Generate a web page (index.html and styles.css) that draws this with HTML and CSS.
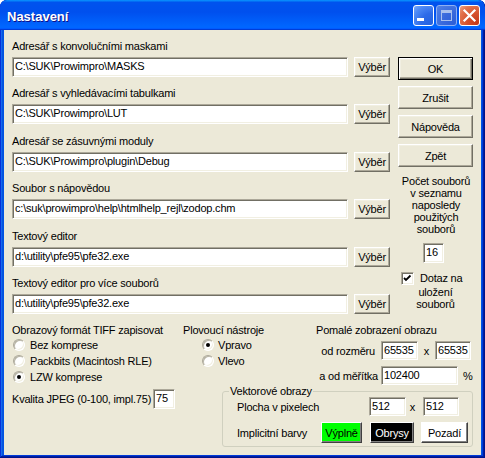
FILE: index.html
```html
<!DOCTYPE html>
<html lang="cs">
<head>
<meta charset="utf-8">
<title>Nastavení</title>
<link rel="stylesheet" href="styles.css">
</head>
<body>
<div class="window">
  <div class="titlebar">
    <span class="title">Nastavení</span>
    <div class="tb-buttons">
      <span class="tb-btn tb-min"><svg width="19" height="19" viewBox="0 0 19 19"><rect x="3" y="12" width="7" height="3" fill="#fff"/></svg></span>
      <span class="tb-btn tb-max"><svg width="19" height="19" viewBox="0 0 19 19"><rect x="4.5" y="4.5" width="10" height="10" fill="none" stroke="#a9c0ee" stroke-width="1"/><rect x="4" y="4" width="11" height="3" fill="#a9c0ee"/></svg></span>
      <span class="tb-btn tb-close"><svg width="19" height="19" viewBox="0 0 19 19"><path d="M4.5 4.5 L14.5 14.5 M14.5 4.5 L4.5 14.5" stroke="#fff" stroke-width="2.2" stroke-linecap="square"/></svg></span>
    </div>
  </div>
  <div class="client">
    <div class="top">
      <div class="paths">
        <div class="path-row">
          <div class="label">Adresář s konvolučními maskami</div>
          <div class="field-line"><div class="edit path-edit">C:\SUK\Prowimpro\MASKS</div><div class="btn pick">Výběr</div></div>
        </div>
        <div class="path-row">
          <div class="label">Adresář s vyhledávacími tabulkami</div>
          <div class="field-line"><div class="edit path-edit">C:\SUK\Prowimpro\LUT</div><div class="btn pick">Výběr</div></div>
        </div>
        <div class="path-row">
          <div class="label">Adresář se zásuvnými moduly</div>
          <div class="field-line"><div class="edit path-edit">C:\SUK\Prowimpro\plugin\Debug</div><div class="btn pick">Výběr</div></div>
        </div>
        <div class="path-row">
          <div class="label">Soubor s nápovědou</div>
          <div class="field-line"><div class="edit path-edit">c:\suk\prowimpro\help\htmlhelp_rejl\zodop.chm</div><div class="btn pick">Výběr</div></div>
        </div>
        <div class="path-row">
          <div class="label">Textový editor</div>
          <div class="field-line"><div class="edit path-edit">d:\utility\pfe95\pfe32.exe</div><div class="btn pick">Výběr</div></div>
        </div>
        <div class="path-row">
          <div class="label">Textový editor pro více souborů</div>
          <div class="field-line"><div class="edit path-edit">d:\utility\pfe95\pfe32.exe</div><div class="btn pick">Výběr</div></div>
        </div>
      </div>
      <div class="side">
        <div class="btn side-btn default">OK</div>
        <div class="btn side-btn">Zrušit</div>
        <div class="btn side-btn">Nápověda</div>
        <div class="btn side-btn">Zpět</div>
        <div class="side-text">Počet souborů<br>v seznamu<br>naposledy<br>použitých<br>souborů</div>
        <div class="edit count-edit">16</div>
        <div class="check-row">
          <span class="checkbox"><svg width="9" height="9" viewBox="0 0 9 9"><path d="M1 4 L3 6 L7.5 1.5" fill="none" stroke="#000" stroke-width="1.8"/></svg></span>
          <span>Dotaz na</span>
        </div>
        <div class="check-more">uložení<br>souborů</div>
      </div>
    </div>
    <div class="bottom">
      <div class="tiff">
        <div class="heading">Obrazový formát TIFF zapisovat</div>
        <div class="radio-row"><span class="radio"></span>Bez komprese</div>
        <div class="radio-row"><span class="radio"></span>Packbits (Macintosh RLE)</div>
        <div class="radio-row"><span class="radio on"></span>LZW komprese</div>
        <div class="jpeg-row"><span>Kvalita JPEG (0-100, impl.75)</span><div class="edit jpeg-edit">75</div></div>
      </div>
      <div class="right-area">
        <div class="top-row">
          <div class="plov">
            <div class="heading">Plovoucí nástroje</div>
            <div class="radio-row indent"><span class="radio on"></span>Vpravo</div>
            <div class="radio-row indent"><span class="radio"></span>Vlevo</div>
          </div>
          <div class="pomale">
            <div class="heading">Pomalé zobrazení obrazu</div>
            <div class="pr-row">
              <span class="pr-label first">od rozměru</span>
              <div class="edit num-edit">65535</div>
              <span class="times">x</span>
              <div class="edit num-edit narrow">65535</div>
            </div>
            <div class="pr-row second">
              <span class="pr-label">a od měřítka</span>
              <div class="edit scale-edit">102400</div>
              <span class="pct">%</span>
            </div>
          </div>
        </div>
        <fieldset class="group">
          <legend>Vektorové obrazy</legend>
          <div class="g-row">
            <span class="g-label plocha">Plocha v pixelech</span>
            <div class="edit num-edit">512</div>
            <span class="times g-times">x</span>
            <div class="edit num-edit narrow">512</div>
          </div>
          <div class="g-row colors">
            <span class="g-label barvy">Implicitní barvy</span>
            <div class="btn color-btn fill">Výplně</div>
            <div class="btn color-btn outline">Obrysy</div>
            <div class="btn color-btn back">Pozadí</div>
          </div>
        </fieldset>
      </div>
    </div>
  </div>
</div>
</body>
</html>
```
FILE: styles.css
```css
html, body {
  margin: 0;
  padding: 0;
  background: #ffffff;
}

body {
  font-family: "Liberation Sans", Arial, sans-serif;
  font-size: 11px;
  letter-spacing: -0.2px;
  color: #000;
}

.window {
  width: 485px;
  height: 458px;
  display: flex;
  flex-direction: column;
  background: #0055e5;
  border-radius: 7px 7px 0 0;
  overflow: hidden;
  box-shadow: inset -1px -1px #00138c, inset 1px 1px #0831d9, inset -2px -2px #001ea0, inset 2px 2px #166aee, inset -3px -3px #003bda, inset 3px 3px #0855dd;
}

/* ---------- title bar ---------- */
.titlebar {
  flex: none;
  height: 30px;
  box-sizing: border-box;
  display: flex;
  align-items: flex-start;
  padding: 5px 5px 0 7px;
  background: linear-gradient(180deg, #0997ff, #0053ee 8%, #0050ee 40%, #0066ff 88%, #0066ff 93%, #005bff 95%, #003dd7 96%, #003dd7);
  border-radius: 7px 7px 0 0;
}

.title {
  margin-top: 4px;
  font-weight: bold;
  font-size: 13px;
  line-height: 15px;
  letter-spacing: 0;
  color: #fff;
  text-shadow: 1px 1px #0f1089;
}

.tb-buttons {
  margin-left: auto;
  display: flex;
  gap: 2px;
}

.tb-btn {
  width: 21px;
  height: 21px;
  box-sizing: border-box;
  border: 1px solid #fff;
  border-radius: 3px;
  display: flex;
}

.tb-min {
  background: radial-gradient(circle at 90% 90%, #2663e0 0%, #2d6ae8 40%, #4d89f5 75%, #79a8fa 100%);
}

.tb-max {
  border-color: #8eb0f3;
  background: radial-gradient(circle at 90% 90%, #2d5fd8 0%, #3868dc 45%, #5283e6 100%);
}

.tb-close {
  background: radial-gradient(circle at 90% 90%, #c4391a 0%, #d5502c 40%, #e2734d 75%, #efa486 100%);
}

/* ---------- client ---------- */
.client {
  flex: 1;
  margin: 0 4px 3px 4px;
  background: #ece9d8;
  padding: 10px 8px 0 8px;
}

.top {
  display: flex;
  gap: 8px;
}

.paths {
  width: 378px;
}

.path-row {
  margin-bottom: 10px;
}

.path-row:nth-child(2) {
  margin-bottom: 11px;
}

.path-row:nth-child(4) {
  margin-bottom: 11px;
}

.label {
  height: 13px;
  line-height: 13px;
  margin-bottom: 4px;
  white-space: nowrap;
}

.field-line {
  display: flex;
  gap: 6px;
  height: 20px;
}

/* sunken edit */
.edit {
  box-sizing: border-box;
  height: 20px;
  background: #fff;
  border: 1px solid;
  border-color: #aca899 #ffffff #ffffff #aca899;
  box-shadow: inset 1px 1px 0 #716f64, inset -1px -1px 0 #f1efe2;
  padding: 0 2px;
  line-height: 16px;
  white-space: nowrap;
  overflow: hidden;
}

.path-edit {
  width: 336px;
}

/* raised button */
.btn {
  box-sizing: border-box;
  background: #ece9d8;
  border: 1px solid;
  border-color: #ffffff #716f64 #716f64 #ffffff;
  box-shadow: inset -1px -1px 0 #aca899, inset 1px 1px 0 #f1efe2;
  display: flex;
  align-items: center;
  justify-content: center;
  white-space: nowrap;
}

.pick {
  width: 36px;
  height: 20px;
}

/* ---------- right side ---------- */
.side {
  width: 75px;
  display: flex;
  flex-direction: column;
  padding-top: 17px;
}

.side-btn {
  height: 23px;
  margin-bottom: 6px;
}

.side-btn.default {
  border: 1px solid #000;
  box-shadow: inset 1px 1px 0 #fff, inset -1px -1px 0 #716f64, inset -2px -2px 0 #aca899, inset 2px 2px 0 #f1efe2;
}

.side-text {
  margin-top: 2px;
  text-align: center;
  line-height: 12px;
  padding-left: 1px;
}

.count-edit {
  margin-top: 8px;
  margin-left: 25px;
  width: 21px;
}

.check-row {
  margin-top: 9px;
  display: flex;
  align-items: center;
  gap: 6px;
  height: 13px;
  line-height: 13px;
  padding-left: 3px;
}

.checkbox {
  width: 13px;
  height: 13px;
  box-sizing: border-box;
  background: #fff;
  border: 1px solid;
  border-color: #aca899 #ffffff #ffffff #aca899;
  box-shadow: inset 1px 1px 0 #716f64, inset -1px -1px 0 #f1efe2;
  display: flex;
  align-items: center;
  justify-content: center;
  flex: none;
}

.check-more {
  margin-top: 1px;
  text-align: center;
  line-height: 12px;
}

/* ---------- bottom ---------- */
.bottom {
  display: flex;
}

.tiff {
  width: 171px;
}

.heading {
  height: 13px;
  line-height: 13px;
  white-space: nowrap;
}

.radio-row {
  height: 16px;
  display: flex;
  align-items: center;
  white-space: nowrap;
}

.radio {
  position: relative;
  width: 12px;
  height: 12px;
  box-sizing: border-box;
  border-radius: 50%;
  background: #fff;
  border: 1px solid;
  border-color: #aca899 #ffffff #ffffff #aca899;
  box-shadow: inset 1px 1px 0 #b8b5a6, inset -1px -1px 0 #f1efe2;
  margin-left: 1px;
  margin-right: 5px;
  flex: none;
}

.radio.on::after {
  content: "";
  position: absolute;
  left: 3px;
  top: 3px;
  width: 4px;
  height: 4px;
  border-radius: 50%;
  background: #000;
}

.radio-row.indent .radio {
  margin-left: 19px;
  margin-right: 4px;
}

.jpeg-row {
  margin-top: 4px;
  display: flex;
  align-items: center;
  height: 20px;
  white-space: nowrap;
}

.jpeg-edit {
  margin-left: 2px;
  width: 22px;
  flex: none;
}

.right-area {
  flex: 1;
  display: flex;
  flex-direction: column;
}

.top-row {
  display: flex;
}

.plov {
  width: 133px;
}

.pomale {
  width: 157px;
}

.pr-row {
  margin-top: 4px;
  height: 19px;
  display: flex;
  align-items: center;
}

.pr-row.second {
  margin-top: 6px;
}

.pr-label {
  width: 62px;
  text-align: right;
  margin-right: 3px;
  white-space: nowrap;
}

.pr-label.first {
  padding-right: 3px;
  box-sizing: border-box;
}

.num-edit {
  width: 37px;
  height: 19px;
}

.num-edit.narrow {
  width: 36px;
}

.times {
  width: 17px;
  text-align: center;
}

.scale-edit {
  width: 77px;
  height: 19px;
}

.pct {
  margin-left: 5px;
}

/* group box */
.group {
  margin: 0 0 0 39px;
  width: 251px;
  box-sizing: border-box;
  border: 1px solid #d0d0bf;
  border-radius: 3px;
  padding: 0 3px 3px 14px;
  min-width: 0;
}

.group legend {
  padding: 0 1px;
  margin-left: -8px;
  line-height: 13px;
  color: #000;
}

.g-row {
  display: flex;
  align-items: center;
  height: 19px;
  margin-top: -1px;
}

.g-row.colors {
  height: 21px;
  margin-top: 6px;
}

.g-label {
  white-space: nowrap;
}

.g-label.plocha {
  width: 132px;
}

.g-label.barvy {
  width: 84px;
}

.g-times {
  width: 17px;
  text-indent: -4px;
}

.color-btn {
  height: 21px;
  border-color: #ffffff #404040 #404040 #ffffff;
  box-shadow: inset -1px -1px 0 #808080;
}

.color-btn.fill {
  width: 41px;
  background: #00ff00;
}

.color-btn.outline {
  width: 44px;
  margin-left: 8px;
  background: #000;
  color: #fff;
}

.color-btn.back {
  width: 47px;
  margin-left: 7px;
  background: #fff;
}
```
